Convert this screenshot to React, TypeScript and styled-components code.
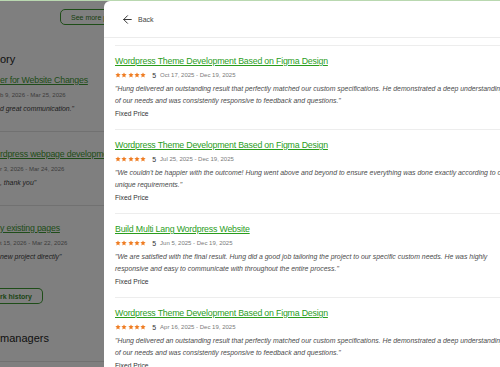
import React from 'react';
import styled, { createGlobalStyle } from 'styled-components';
import { ArrowLeft } from 'lucide-react';

const GlobalStyle = createGlobalStyle`
  html, body {
    margin: 0;
    padding: 0;
    background: #fff;
    overflow: hidden;
  }
  body {
    font-family: "Liberation Sans", Arial, sans-serif;
  }
`;

const Screen = styled.div`
  position: relative;
  width: 500px;
  height: 367px;
  overflow: hidden;
  background: #fff;
`;

// underlying page, seen dimmed on the left
const Page = styled.div`
  display: flex;
  flex-direction: column;
  align-items: flex-start;
  width: 240px;
`;

const SeeMoreButton = styled.button`
  margin: 9px 0 0 60px;
  height: 16px;
  width: 100px;
  padding: 0 0 0 10px;
  border: 1px solid #3d9a30;
  border-radius: 5px;
  background: #fff;
  color: #2f7f23;
  font: 7px "Liberation Sans", Arial, sans-serif;
  text-align: left;
  white-space: nowrap;
`;

const SectionHeading = styled.h2<{ $gap: number }>`
  margin: ${(p) => p.$gap}px 0 0;
  font-size: 11px;
  font-weight: normal;
  line-height: 16px;
  color: #1e1e1e;
  white-space: nowrap;
`;

const HistoryList = styled.div`
  margin-top: 7px;
  width: 100%;
`;

const HistoryItem = styled.div`
  padding-bottom: 17px;
  & + & {
    border-top: 1px solid #e2e2e2;
    padding-top: 16px;
  }
`;

const HistoryTitle = styled.a`
  display: block;
  font-size: 8.8px;
  letter-spacing: -0.2px;
  line-height: 12px;
  color: #3f9a33;
  text-decoration: underline;
  white-space: nowrap;
`;

const HistoryDate = styled.div`
  margin-top: 4px;
  font-size: 6px;
  line-height: 10px;
  color: #7a7a7a;
  white-space: nowrap;
`;

const HistoryQuote = styled.div`
  margin-top: 4px;
  font-size: 6.9px;
  font-style: italic;
  line-height: 10px;
  color: #3c3c3c;
  white-space: nowrap;
`;

const HistoryButton = styled.button`
  margin-top: 9px;
  height: 16px;
  padding: 0 10px 0 0;
  border: 1px solid #3d9a30;
  border-left: 0;
  border-radius: 0 5px 5px 0;
  background: #fff;
  color: #3a8a2e;
  font: bold 7px "Liberation Sans", Arial, sans-serif;
`;

const PageRule = styled.div`
  margin-top: 15px;
  width: 100%;
  border-top: 1px solid #e2e2e2;
`;

const Overlay = styled.div`
  position: absolute;
  inset: 0;
  background: rgba(0, 0, 0, 0.5);
`;

const TopLine = styled.div`
  position: absolute;
  top: 0;
  left: 0;
  right: 0;
  height: 1px;
  background: #b9d8b0;
  z-index: 3;
`;

// side drawer
const Drawer = styled.aside`
  position: absolute;
  top: 1px;
  left: 104px;
  bottom: 0;
  width: 418px;
  background: #fff;
  border-radius: 6px 0 0 0;
  overflow: hidden;
  z-index: 2;
`;

const DrawerHeader = styled.div`
  display: flex;
  align-items: center;
  height: 36px;
  padding-left: 17px;
  border-bottom: 1px solid #ececec;
`;

const BackButton = styled.button`
  display: flex;
  align-items: center;
  gap: 4px;
  padding: 0;
  border: 0;
  background: none;
  color: #444;
  font: 7px "Liberation Sans", Arial, sans-serif;
  svg {
    color: #333;
  }
`;

const ReviewList = styled.div`
  padding: 7px 11px 0;
`;

const ReviewItem = styled.div`
  padding: 9px 0;
  border-top: 1px solid #ededed;
`;

const ReviewTitle = styled.a`
  display: block;
  font-size: 8.8px;
  letter-spacing: -0.2px;
  line-height: 13px;
  color: #2a9d1c;
  text-decoration: underline;
  white-space: nowrap;
`;

const RatingRow = styled.div`
  display: flex;
  align-items: center;
  height: 10px;
  margin-top: 2px;
`;

const Stars = styled.div`
  display: flex;
  gap: 0.3px;
`;

const RatingValue = styled.span`
  margin-left: 6px;
  font-size: 7px;
  color: #333;
`;

const RatingDates = styled.span`
  margin-left: 4px;
  font-size: 6px;
  color: #7a7a7a;
`;

const ReviewQuote = styled.p`
  margin: 3px 0 0;
  font-size: 6.9px;
  font-style: italic;
  line-height: 12px;
  color: #4b4b4b;
`;

const ReviewTerms = styled.div`
  margin-top: 1px;
  font-size: 6.7px;
  line-height: 12px;
  color: #333;
`;

const Star = () => (
  <svg width="6" height="6" viewBox="0 0 24 24">
    <polygon
      points="12 1.5 15.2 8.2 22.5 9.1 17.1 14.1 18.5 21.5 12 17.9 5.5 21.5 6.9 14.1 1.5 9.1 8.8 8.2"
      fill="#ef7d23"
    />
  </svg>
);

const history = [
  { title: 'er for Website Changes', date: 'b 9, 2026 - Mar 25, 2026', quote: 'd great communication."' },
  { title: 'rdpress webpage development', date: 'r 3, 2026 - Mar 24, 2026', quote: ', thank you"' },
  { title: 'y existing pages', date: 't 15, 2026 - Mar 22, 2026', quote: 'new project directly"' },
];

const reviews = [
  {
    title: 'Wordpress Theme Development Based on Figma Design',
    dates: 'Oct 17, 2025 - Dec 19, 2025',
    quote:
      '"Hung delivered an outstanding result that perfectly matched our custom specifications. He demonstrated a deep understanding of our needs and was consistently responsive to feedback and questions."',
  },
  {
    title: 'Wordpress Theme Development Based on Figma Design',
    dates: 'Jul 25, 2025 - Dec 19, 2025',
    quote:
      '"We couldn\'t be happier with the outcome! Hung went above and beyond to ensure everything was done exactly according to our unique requirements."',
  },
  {
    title: 'Build Multi Lang Wordpress Website',
    dates: 'Jun 5, 2025 - Dec 19, 2025',
    quote:
      '"We are satisfied with the final result. Hung did a good job tailoring the project to our specific custom needs. He was highly responsive and easy to communicate with throughout the entire process."',
  },
  {
    title: 'Wordpress Theme Development Based on Figma Design',
    dates: 'Apr 16, 2025 - Dec 19, 2025',
    quote:
      '"Hung delivered an outstanding result that perfectly matched our custom specifications. He demonstrated a deep understanding of our needs and was consistently responsive to feedback and questions."',
  },
];

export default function App() {
  return (
    <>
      <GlobalStyle />
      <Screen>
        <Page>
          <SeeMoreButton>See more projects</SeeMoreButton>
          <SectionHeading $gap={26}>ory</SectionHeading>
          <HistoryList>
            {history.map((h, i) => (
              <HistoryItem key={i}>
                <HistoryTitle>{h.title}</HistoryTitle>
                <HistoryDate>{h.date}</HistoryDate>
                <HistoryQuote>{h.quote}</HistoryQuote>
              </HistoryItem>
            ))}
          </HistoryList>
          <HistoryButton>rk history</HistoryButton>
          <SectionHeading $gap={26}>managers</SectionHeading>
          <PageRule />
        </Page>
        <Overlay />
        <TopLine />
        <Drawer>
          <DrawerHeader>
            <BackButton>
              <ArrowLeft size={13} strokeWidth={1.8} />
              Back
            </BackButton>
          </DrawerHeader>
          <ReviewList>
            {reviews.map((r, i) => (
              <ReviewItem key={i}>
                <ReviewTitle>{r.title}</ReviewTitle>
                <RatingRow>
                  <Stars>
                    {[0, 1, 2, 3, 4].map((s) => (
                      <Star key={s} />
                    ))}
                  </Stars>
                  <RatingValue>5</RatingValue>
                  <RatingDates>{r.dates}</RatingDates>
                </RatingRow>
                <ReviewQuote>{r.quote}</ReviewQuote>
                <ReviewTerms>Fixed Price</ReviewTerms>
              </ReviewItem>
            ))}
          </ReviewList>
        </Drawer>
      </Screen>
    </>
  );
}
